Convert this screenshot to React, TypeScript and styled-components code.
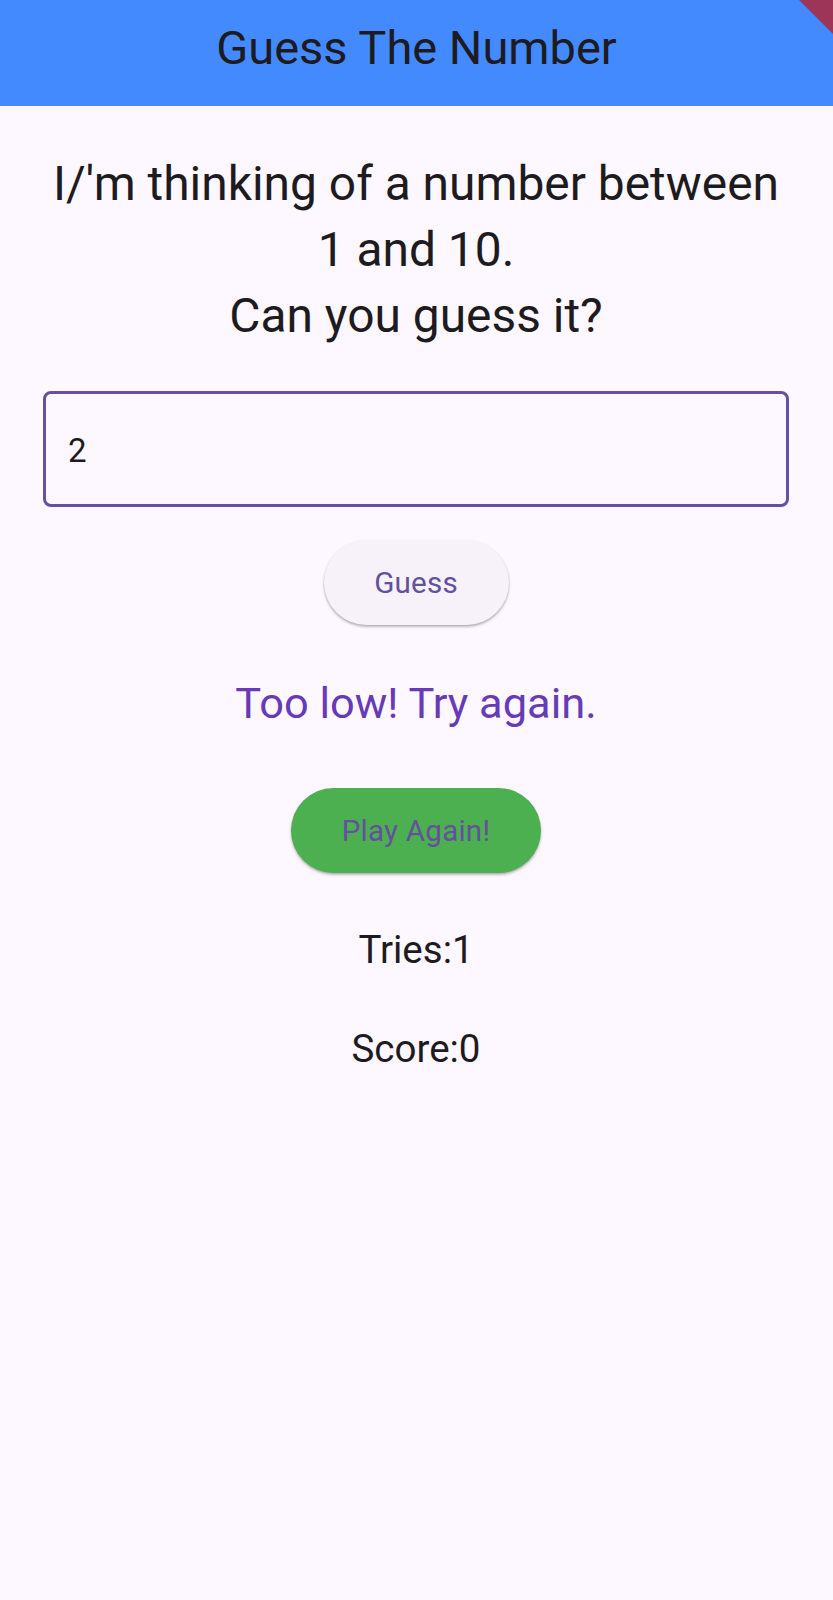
import React from "react";
import styled, { createGlobalStyle } from "styled-components";

const GlobalStyle = createGlobalStyle`
  html, body {
    margin: 0;
    padding: 0;
    background: #fdf7ff;
  }
  body {
    font-family: Roboto, "Noto Sans", "Liberation Sans", sans-serif;
    color: #1d1b20;
  }
`;

const Screen = styled.div`
  position: relative;
  width: 833px;
  min-height: 1600px;
  background: #fdf7ff;
  overflow: hidden;
`;

const AppBar = styled.header`
  height: 106px;
  background: #448aff;
  display: flex;
  align-items: center;
  justify-content: center;
`;

const Title = styled.h1`
  margin: 0;
  font-family: Roboto, sans-serif;
  font-weight: 400;
  font-size: 47px;
  line-height: 50px;
  color: #1d1b20;
  padding-bottom: 11px;
`;

const DebugCorner = styled.div`
  position: absolute;
  top: 0;
  right: 0;
  width: 34px;
  height: 34px;
  background: #9c3557;
  clip-path: polygon(0 0, 100% 0, 100% 100%);
`;

const Body = styled.main`
  display: flex;
  flex-direction: column;
  align-items: center;
  padding: 45px 44px 0 43px;
`;

const Prompt = styled.p`
  margin: 0;
  text-align: center;
  font-size: 47.9px;
  line-height: 66px;
  color: #1d1b20;
`;

const Field = styled.div`
  box-sizing: border-box;
  align-self: stretch;
  margin-top: 42px;
  height: 116px;
  border: 3.5px solid #6750a4;
  border-radius: 8px;
  display: flex;
  align-items: center;
  padding-left: 22px;
`;

const FieldValue = styled.span`
  font-size: 33px;
  color: #1d1b20;
  padding-top: 2px;
`;

const PillButton = styled.button<{ $bg: string; $w: number; $mt: number }>`
  box-sizing: border-box;
  margin-top: ${(p) => p.$mt}px;
  width: ${(p) => p.$w}px;
  height: 85px;
  border: none;
  border-radius: 43px;
  background: ${(p) => p.$bg};
  color: #65509f;
  font-family: Roboto, sans-serif;
  font-size: 29.6px;
  font-weight: 400;
  letter-spacing: 0.2px;
  box-shadow: 0 2px 3px rgba(0, 0, 0, 0.22), 0 1px 2px rgba(0, 0, 0, 0.12);
  display: flex;
  align-items: center;
  justify-content: center;
`;

const Feedback = styled.p`
  margin: 54px 0 0;
  font-size: 43.4px;
  line-height: 50px;
  color: #673ab7;
`;

const Stat = styled.p<{ $mt: number }>`
  margin: ${(p) => p.$mt}px 0 0;
  font-size: 38.5px;
  line-height: 45px;
  color: #1d1b20;
`;

export default function App() {
  return (
    <>
      <GlobalStyle />
      <Screen>
        <AppBar>
          <Title>Guess The Number</Title>
        </AppBar>
        <DebugCorner />
        <Body>
          <Prompt>
            I/'m thinking of a number between
            <br />1 and 10.
            <br />
            Can you guess it?
          </Prompt>
          <Field>
            <FieldValue>2</FieldValue>
          </Field>
          <PillButton $bg="#f7f2fa" $w={185} $mt={33}>
            Guess
          </PillButton>
          <Feedback>Too low! Try again.</Feedback>
          <PillButton $bg="#4caf50" $w={250} $mt={59}>
            Play Again!
          </PillButton>
          <Stat $mt={54}>Tries:1</Stat>
          <Stat $mt={54}>Score:0</Stat>
        </Body>
      </Screen>
    </>
  );
}
